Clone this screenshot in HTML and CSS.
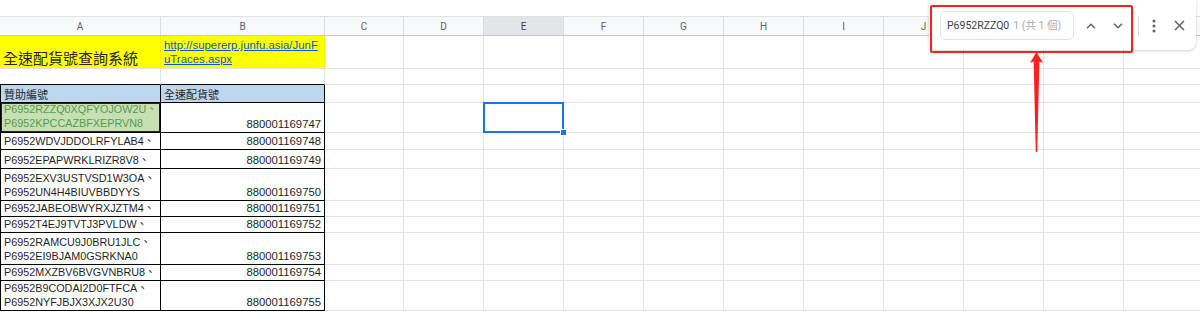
FILE: index.html
```html
<!DOCTYPE html>
<html lang="zh-Hant">

<head>
    <meta charset="UTF-8">
    <meta name="viewport" content="width=device-width, initial-scale=1.0">
    <title>全速配貨號查詢系統</title>
    <link rel="stylesheet" href="styles.css">
</head>

<body>
    <div class="topbar"></div>

    <div class="sheet">
        <div class="colhead">
            <div class="ch">A</div>
            <div class="ch">B</div>
            <div class="ch">C</div>
            <div class="ch">D</div>
            <div class="ch active">E</div>
            <div class="ch">F</div>
            <div class="ch">G</div>
            <div class="ch">H</div>
            <div class="ch">I</div>
            <div class="ch">J</div>
            <div class="ch">K</div>
            <div class="ch">L</div>
            <div class="ch">M</div>
        </div>

        <div class="row h33">
            <div class="cell yellow title">全速配貨號查詢系統</div>
            <div class="cell yellow link"><a href="#">http://supererp.junfu.asia/JunF<br>uTraces.aspx</a></div>
            <div class="rest"></div>
        </div>

        <div class="row h16">
            <div class="cell under"></div>
            <div class="cell under"></div>
            <div class="rest"></div>
        </div>

        <div class="row h18">
            <div class="cell box first head">贊助編號</div>
            <div class="cell box head">全速配貨號</div>
            <div class="rest"></div>
        </div>

        <div class="row h30">
            <div class="cell box first match">P6952RZZQ0XQFYOJOW2U、<br>P6952KPCCAZBFXEPRVN8</div>
            <div class="cell box num">880001169747</div>
            <div class="rest"></div>
        </div>

        <div class="row h17">
            <div class="cell box first">P6952WDVJDDOLRFYLAB4、</div>
            <div class="cell box num">880001169748</div>
            <div class="rest"></div>
        </div>

        <div class="row h19">
            <div class="cell box first">P6952EPAPWRKLRIZR8V8、</div>
            <div class="cell box num">880001169749</div>
            <div class="rest"></div>
        </div>

        <div class="row h32">
            <div class="cell box first">P6952EXV3USTVSD1W3OA、<br>P6952UN4H4BIUVBBDYYS</div>
            <div class="cell box num">880001169750</div>
            <div class="rest"></div>
        </div>

        <div class="row h16">
            <div class="cell box first">P6952JABEOBWYRXJZTM4、</div>
            <div class="cell box num">880001169751</div>
            <div class="rest"></div>
        </div>

        <div class="row h16">
            <div class="cell box first">P6952T4EJ9TVTJ3PVLDW、</div>
            <div class="cell box num">880001169752</div>
            <div class="rest"></div>
        </div>

        <div class="row h32">
            <div class="cell box first">P6952RAMCU9J0BRU1JLC、<br>P6952EI9BJAM0GSRKNA0</div>
            <div class="cell box num">880001169753</div>
            <div class="rest"></div>
        </div>

        <div class="row h16">
            <div class="cell box first">P6952MXZBV6BVGVNBRU8、</div>
            <div class="cell box num">880001169754</div>
            <div class="rest"></div>
        </div>

        <div class="row h30">
            <div class="cell box first">P6952B9CODAI2D0FTFCA、<br>P6952NYFJBJX3XJX2U30</div>
            <div class="cell box num">880001169755</div>
            <div class="rest"></div>
        </div>

        <div class="selection"><span class="handle"></span></div>
    </div>

    <div class="find-panel">
        <div class="find-input">
            <span class="query">P6952RZZQ0</span>
            <span class="count">1 (共 1 個)</span>
        </div>
        <button class="icon-btn" type="button">
            <svg width="10" height="6" viewBox="0 0 10 6"><path d="M1 5.2 5 1.2 9 5.2" fill="none" stroke="#5f6368" stroke-width="1.5"/></svg>
        </button>
        <button class="icon-btn" type="button">
            <svg width="10" height="6" viewBox="0 0 10 6"><path d="M1 0.8 5 4.8 9 0.8" fill="none" stroke="#5f6368" stroke-width="1.5"/></svg>
        </button>
        <span class="divider"></span>
        <button class="icon-btn" type="button">
            <svg width="4" height="14" viewBox="0 0 4 14"><circle cx="2" cy="2" r="1.5" fill="#5f6368"/><circle cx="2" cy="7" r="1.5" fill="#5f6368"/><circle cx="2" cy="12" r="1.5" fill="#5f6368"/></svg>
        </button>
        <button class="icon-btn close" type="button">
            <svg width="11" height="11" viewBox="0 0 11 11"><path d="M1 1 10 10M10 1 1 10" fill="none" stroke="#5f6368" stroke-width="1.5"/></svg>
        </button>
    </div>

    <div class="callout"></div>
    <svg class="arrow" width="20" height="104" viewBox="0 0 20 104">
        <polygon points="9.5,0 16,11 12.4,9.5 10.2,100 8.8,100 6.6,9.5 3,11" fill="#ff1f1f"/>
    </svg>
</body>

</html>
```

FILE: styles.css
```css
* {
    box-sizing: border-box;
}

body {
    margin: 0;
    font-family: "Liberation Sans", Arial, "Noto Sans CJK TC", sans-serif;
    background-color: white;
    overflow: hidden;
}

.topbar {
    height: 17px;
    border-bottom: 1px solid #e1e1e1;
}

.sheet {
    position: relative;
}

.colhead {
    display: grid;
    grid-template-columns: 161px 164px 79px repeat(10, 80px);
    height: 19px;
    background-color: #f8f9fa;
    border-bottom: 1px solid #c4c7c5;
}

.ch {
    display: flex;
    align-items: center;
    justify-content: center;
    border-right: 1px solid #dadce0;
    font-family: Roboto, "Liberation Sans", sans-serif;
    font-size: 10px;
    color: #5f6368;
}

.ch.active {
    background-color: #e3e5e8;
    color: #3c4043;
}

.row {
    display: grid;
    grid-template-columns: 161px 164px 1fr;
}

.h16 { height: 16px; }
.h17 { height: 17px; }
.h18 { height: 18px; }
.h19 { height: 19px; }
.h30 { height: 30px; }
.h32 { height: 32px; }
.h33 { height: 33px; }

.cell {
    display: flex;
    flex-direction: column;
    justify-content: flex-end;
    padding: 0 3px 1px;
    border-right: 1px solid #e2e2e2;
    border-bottom: 1px solid #e2e2e2;
    font-size: 10.8px;
    line-height: 14px;
    color: #1f1f1f;
    white-space: nowrap;
    overflow: hidden;
}

.rest {
    border-bottom: 1px solid #e2e2e2;
    background: repeating-linear-gradient(to right, transparent 0 78px, #e2e2e2 78px 79px, transparent 79px 80px);
}

.yellow {
    background-color: #ffff00;
    border-right-color: #f2f200;
}

.title {
    font-family: "Noto Sans CJK TC", sans-serif;
    font-size: 15px;
    line-height: 18px;
    padding-bottom: 1px;
    color: #262626;
}

.link {
    padding-bottom: 2px;
}

.link a {
    color: #1155cc;
    font-size: 11.4px;
    line-height: 14px;
    text-decoration: underline;
}

.under {
    border-bottom-color: #000;
}

.box {
    border-right-color: #000;
    border-bottom-color: #000;
}

.box.first {
    border-left: 1px solid #000;
}

.head {
    background-color: #bdd7ee;
    font-family: "Noto Sans CJK TC", sans-serif;
    font-size: 11px;
    line-height: 15px;
    padding-bottom: 0;
}

.match {
    background-color: #c6e0b4;
    color: #5b9a47;
    box-shadow: inset 0 0 0 1px #222;
    padding-bottom: 2px;
}

.num {
    align-items: flex-end;
    font-size: 11.3px;
}

.selection {
    position: absolute;
    left: 483px;
    top: 85px;
    width: 81px;
    height: 31px;
    border: 2px solid #1a73e8;
}

.handle {
    position: absolute;
    right: -5px;
    bottom: -5px;
    width: 7px;
    height: 7px;
    background-color: #1a73e8;
    border: 1px solid white;
}

.find-panel {
    position: absolute;
    top: 0;
    left: 929px;
    width: 267px;
    height: 50px;
    display: flex;
    align-items: center;
    padding: 1px 0 0 11px;
    background-color: white;
    border-radius: 0 0 8px 8px;
    box-shadow: 0 1px 3px rgba(60, 64, 67, 0.25);
}

.find-input {
    display: flex;
    align-items: center;
    gap: 4px;
    width: 134px;
    height: 29px;
    padding-left: 6px;
    border: 1px solid #e3e3e3;
    border-radius: 5px;
    font-family: Roboto, "Noto Sans CJK TC", sans-serif;
    font-size: 10.5px;
    line-height: 14px;
    white-space: nowrap;
}

.query {
    color: #3c4043;
}

.count {
    color: #a8abaf;
}

.icon-btn {
    display: flex;
    align-items: center;
    justify-content: center;
    width: 24px;
    height: 24px;
    padding: 0;
    margin-left: 3px;
    background: none;
    border: none;
}

.icon-btn:first-of-type {
    margin-left: 5px;
}

.icon-btn.close {
    margin-left: 1px;
}

.divider {
    width: 1px;
    height: 20px;
    margin-left: 8px;
    background-color: #dadce0;
}

.callout {
    position: absolute;
    left: 930px;
    top: 5px;
    width: 203px;
    height: 48px;
    border: 2px solid #ff1f1f;
    border-radius: 2px;
}

.arrow {
    position: absolute;
    left: 1027px;
    top: 52px;
}
```
